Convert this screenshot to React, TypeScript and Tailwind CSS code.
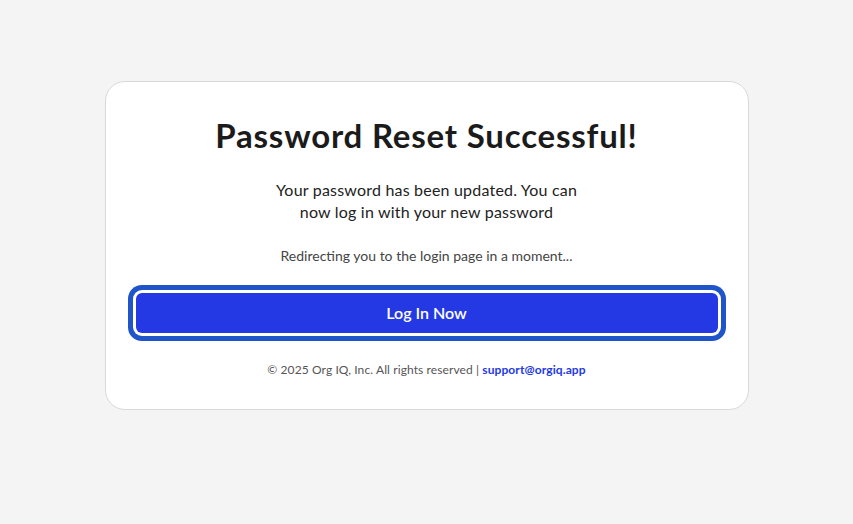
export default function App() {
  return (
    <div
      className="min-h-screen bg-[#f4f4f4] flex justify-center pt-[81px]"
      style={{ fontFamily: "Lato, 'Open Sans', sans-serif" }}
    >
      <div className="w-[644px] h-fit bg-white border border-[#d9d9d9] rounded-[20px] px-[30px] pt-[33px] pb-[31px] flex flex-col items-center">
        <h1 className="text-[33px] leading-[40px] font-bold text-[#1b1b1b] tracking-[0.8px]">
          Password Reset Successful!
        </h1>
        <p className="mt-[24px] max-w-[320px] text-center text-[16px] leading-[22px] text-[#222] tracking-[0.2px]">
          Your password has been updated. You can now log in with your new password
        </p>
        <p className="mt-[23px] text-[14px] leading-[20px] text-[#444]">
          Redirecting you to the login page in a moment...
        </p>
        <button className="mt-[27px] w-full h-[40px] rounded-[6px] bg-[#2439e3] text-white text-[16px] font-semibold ring-[5px] ring-[#1f55c8] ring-offset-[3px] ring-offset-white">
          Log In Now
        </button>
        <p className="mt-[29px] text-[12px] leading-[16px] text-[#555] tracking-[0.1px]">
          © 2025 Org IQ, Inc. All rights reserved |{" "}
          <a href="#" className="text-[#2439e3] font-bold">
            support@orgiq.app
          </a>
        </p>
      </div>
    </div>
  );
}
